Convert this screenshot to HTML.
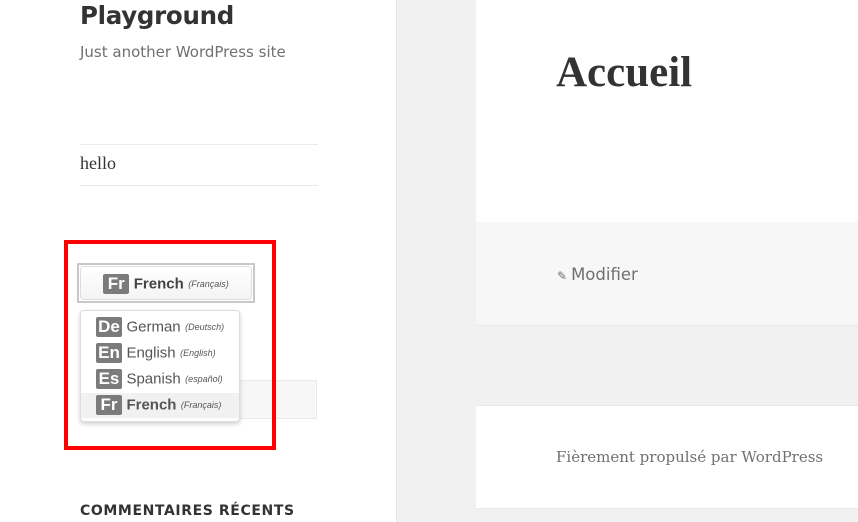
<!DOCTYPE html>
<html><head><meta charset="utf-8"><style>
*{margin:0;padding:0;box-sizing:border-box}
body{width:858px;height:522px;overflow:hidden;background:#f1f1f1;font-family:"Liberation Sans",sans-serif;position:relative}
.side{position:absolute;left:0;top:0;width:397px;height:522px;background:#fff;border-right:1px solid #e6e6e6}
.abs{position:absolute}
.title{left:80px;top:1px;font:bold 24.5px "DejaVu Sans",sans-serif;color:#333;letter-spacing:-0.3px}
.tag{left:80px;top:43px;font:15px "DejaVu Sans",sans-serif;color:#707070}
.hr{height:1px;background:#eaeaea;left:80px;width:238px}
.hello{left:80px;top:153px;font:18px "Liberation Serif",serif;color:#333}
.red{left:64px;top:240px;width:212px;height:210px;border:4px solid #f00}
.btnout{left:77px;top:263px;width:178px;height:40px;border:2px solid #c8c8c8;background:#fff}
.btnin{position:absolute;left:1px;top:1px;right:1px;bottom:1px;border:1px solid #ddd;border-radius:4px;background:linear-gradient(#fff,#f4f4f4);text-align:center;padding-top:7px}
.b{display:inline-block;background:#7b7b7b;color:#fff;font:bold 17px "Liberation Sans",sans-serif;width:26px;height:20px;line-height:20px;text-align:center;border-radius:2px;vertical-align:middle}
.n{font-size:15px;color:#555;vertical-align:middle}
.i{font-size:9px;font-style:italic;color:#555;vertical-align:middle}
.search{left:80px;top:380px;width:237px;height:39px;background:#f7f7f7;border:1px solid #eaeaea}
.dd{left:80px;top:310px;width:160px;height:112px;background:#fff;border:1px solid #ddd;border-radius:4px;box-shadow:0 2px 5px rgba(0,0,0,.2)}
.row{position:absolute;left:0;width:158px;height:24px;padding-left:15px;padding-top:2px;white-space:nowrap}
.recent{left:80px;top:503px;font:bold 14px "DejaVu Sans",sans-serif;color:#333;letter-spacing:0.6px}
.card{left:476px;width:382px;background:#fff}
.acc{left:556px;top:48px;font:bold 43px "Liberation Serif",serif;color:#333}
.mod{left:557px;top:265px;font:16.5px "DejaVu Sans",sans-serif;color:#707070}
.fier{left:556px;top:448px;font:15px "DejaVu Serif","Liberation Serif",serif;color:#707070}
</style></head><body>
<div class="side"></div>
<div class="abs title">Playground</div>
<div class="abs tag">Just another WordPress site</div>
<div class="abs hr" style="top:144px"></div>
<div class="abs hello">hello</div>
<div class="abs hr" style="top:185px"></div>
<div class="abs search"></div>
<div class="abs btnout"><div class="btnin"><span class="b">Fr</span> <b class="n" style="color:#444">French</b> <span class="i">(Français)</span></div></div>
<div class="abs dd">
<div class="row" style="top:4px"><span class="b">De</span> <span class="n">German</span> <span class="i">(Deutsch)</span></div>
<div class="row" style="top:30px"><span class="b">En</span> <span class="n">English</span> <span class="i">(English)</span></div>
<div class="row" style="top:56px"><span class="b">Es</span> <span class="n">Spanish</span> <span class="i">(español)</span></div>
<div class="row" style="top:82px;background:#f1f1f1;height:25px"><span class="b">Fr</span> <b class="n">French</b> <span class="i">(Français)</span></div>
</div>
<div class="abs red"></div>
<div class="abs recent">COMMENTAIRES RÉCENTS</div>
<div class="abs card" style="top:0;height:222px"></div>
<div class="abs card" style="top:222px;height:104px;background:#f7f7f7;border-bottom:1px solid #eaeaea"></div>
<div class="abs card" style="top:405px;height:104px;border-top:1px solid #eaeaea;border-bottom:1px solid #eaeaea"></div>
<div class="abs acc">Accueil</div>
<div class="abs mod"><span style="font-size:12px;margin-right:4px">✎</span>Modifier</div>
<div class="abs fier">Fièrement propulsé par WordPress</div>
</body></html>
